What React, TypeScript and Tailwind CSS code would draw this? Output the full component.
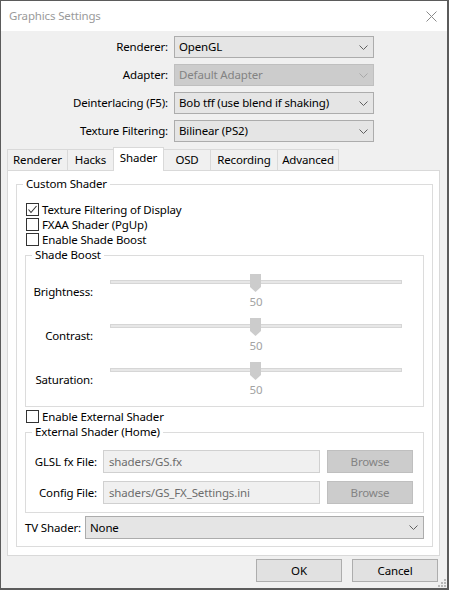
import React from "react";

const font = { fontFamily: '"Noto Sans", "Open Sans", sans-serif' };

function Chevron({ color = "#606060" }: { color?: string }) {
  return (
    <svg width="9" height="5" viewBox="0 0 9 5" className="shrink-0">
      <polyline points="0.5,0.5 4.5,4.5 8.5,0.5" fill="none" stroke={color} strokeWidth="1" />
    </svg>
  );
}

function Combo({ text, disabled = false, className = "" }: { text: string; disabled?: boolean; className?: string }) {
  return (
    <div
      className={
        "flex h-[22px] items-center justify-between border pl-[4px] pr-[5px] " +
        (disabled ? "border-[#bfbfbf] bg-[#cccccc] text-[#838383] " : "border-[#acacac] bg-[#e5e5e5] text-black ") +
        className
      }
    >
      <span className="whitespace-nowrap">{text}</span>
      <Chevron color={disabled ? "#a8a8a8" : "#606060"} />
    </div>
  );
}

function Check({ label, checked = false }: { label: string; checked?: boolean }) {
  return (
    <div className="flex h-[15px] items-center gap-[3px]">
      <div className="ml-[1px] flex h-[13px] w-[13px] shrink-0 items-center justify-center border border-[#333333] bg-white">
        {checked && (
          <svg width="11" height="11" viewBox="0 0 11 11">
            <polyline points="1.5,5.5 4,8.5 9.5,2" fill="none" stroke="#333333" strokeWidth="1.1" />
          </svg>
        )}
      </div>
      <span className="whitespace-nowrap leading-[14px]">{label}</span>
    </div>
  );
}

function Group({ title, children, className = "" }: { title: string; children: React.ReactNode; className?: string }) {
  return (
    <fieldset className={"border border-[#dcdcdc] " + className}>
      <legend className="ml-[6px] px-[3px] leading-[16px]">{title}</legend>
      {children}
    </fieldset>
  );
}

function SliderRow({ label }: { label: string }) {
  return (
    <div className="flex h-[44px] items-start">
      <div className="mt-[21px] w-[67px] whitespace-nowrap text-right leading-[16px]">{label}</div>
      <div className="relative ml-[17px] h-[44px] w-[292px]">
        <div className="absolute left-0 right-0 top-[17px] h-[4px] border border-[#d6d6d6] bg-[#e7e7e7]" />
        <svg width="11" height="18" viewBox="0 0 11 18" className="absolute left-[140px] top-[11px]">
          <polygon points="0,0 11,0 11,13 5.5,18 0,13" fill="#cccccc" />
        </svg>
        <div className="absolute left-[126px] top-[31px] w-[40px] text-center leading-[16px] text-[#a3a3a3]">50</div>
      </div>
    </div>
  );
}

function FileRow({ label, value }: { label: string; value: string }) {
  return (
    <div className="flex h-[23px] items-center">
      <div className="w-[71px] whitespace-nowrap text-right">{label}</div>
      <div className="ml-[6px] flex h-[23px] w-[217px] items-center border border-[#d0d0d0] bg-[#f0f0f0] pl-[5px] text-[#6d6d6d]">
        {value}
      </div>
      <div className="ml-[7px] flex h-[23px] w-[86px] items-center justify-center border border-[#bfbfbf] bg-[#cccccc] text-[#838383]">
        Browse
      </div>
    </div>
  );
}

export default function App() {
  const tabs = [
    { t: "Renderer", w: "w-[60px]" },
    { t: "Hacks", w: "w-[46px]" },
    { t: "Shader", w: "w-[51px]", sel: true },
    { t: "OSD", w: "w-[46px]" },
    { t: "Recording", w: "w-[67px]" },
    { t: "Advanced", w: "w-[62px]" },
  ];
  return (
    <div
      style={font}
      className="relative flex h-[590px] w-[449px] flex-col overflow-hidden border-b-2 border-l border-r-2 border-t border-[#5b5b5b] bg-[#f0f0f0] text-[11.5px] tracking-[-0.15px] text-black"
    >
      {/* Title bar */}
      <div className="flex h-[30px] shrink-0 items-center justify-between bg-white pl-[8px] pr-[8px]">
        <span className="text-[#9a9a9a]">Graphics Settings</span>
        <svg width="11" height="11" viewBox="0 0 11 11" className="mr-[2px]">
          <line x1="0.5" y1="0.5" x2="10.5" y2="10.5" stroke="#8a8a8a" strokeWidth="1" />
          <line x1="10.5" y1="0.5" x2="0.5" y2="10.5" stroke="#8a8a8a" strokeWidth="1" />
        </svg>
      </div>

      {/* Top form */}
      <div className="grid grid-cols-[167px_200px] gap-x-[6px] gap-y-[6px] pt-[5px]">
        <div className="flex h-[22px] items-center justify-end">Renderer:</div>
        <Combo text="OpenGL" />
        <div className="flex h-[22px] items-center justify-end">Adapter:</div>
        <Combo text="Default Adapter" disabled />
        <div className="flex h-[22px] items-center justify-end">Deinterlacing (F5):</div>
        <Combo text="Bob tff (use blend if shaking)" />
        <div className="flex h-[22px] items-center justify-end">Texture Filtering:</div>
        <Combo text="Bilinear (PS2)" />
      </div>

      {/* Tabs */}
      <div className="ml-[6px] mt-[5px] flex items-end">
        {tabs.map((tab, i) => (
          <div
            key={tab.t}
            className={
              "flex items-center justify-center border-l border-t border-[#d9d9d9] " +
              tab.w +
              (i === tabs.length - 1 ? " border-r" : "") +
              (tab.sel
                ? " relative z-10 mb-[-1px] h-[24px] border-r bg-white pb-[3px]"
                : " h-[21px] bg-[#f0f0f0]") +
              (i === 3 ? " border-l-0" : "")
            }
          >
            {tab.t}
          </div>
        ))}
      </div>

      {/* Pane */}
      <div className="ml-[6px] flex h-[386px] w-[433px] flex-col border border-[#d9d9d9] bg-white pl-[8px] pr-[6px] pt-[5px]">
        <Group title="Custom Shader" className="h-[371px]">
          <div className="px-[8px]">
            <div className="pt-[10px]">
              <Check label="Texture Filtering of Display" checked />
              <Check label="FXAA Shader (PgUp)" />
              <Check label="Enable Shade Boost" />
            </div>
            <Group title="Shade Boost" className="h-[160px]">
              <SliderRow label="Brightness:" />
              <SliderRow label="Contrast:" />
              <SliderRow label="Saturation:" />
            </Group>
            <div className="mt-[2px]">
              <Check label="Enable External Shader" />
            </div>
            <Group title="External Shader (Home)" className="h-[89px]">
              <div className="flex flex-col gap-[8px] pt-[10px]">
                <FileRow label="GLSL fx File:" value="shaders/GS.fx" />
                <FileRow label="Config File:" value="shaders/GS_FX_Settings.ini" />
              </div>
            </Group>
            <div className="mt-[3px] flex items-center">
              <span className="w-[60px] shrink-0 whitespace-nowrap">TV Shader:</span>
              <Combo text="None" className="h-[23px] flex-1" />
            </div>
          </div>
        </Group>
      </div>

      {/* Buttons */}
      <div className="mt-[3px] flex justify-end gap-[10px] pr-[9px]">
        <div className="flex h-[23px] w-[86px] items-center justify-center border border-[#adadad] bg-[#e1e1e1]">OK</div>
        <div className="flex h-[23px] w-[86px] items-center justify-center border border-[#adadad] bg-[#e1e1e1]">Cancel</div>
      </div>

      {/* size grip */}
      <svg width="8" height="8" viewBox="0 0 8 8" className="absolute bottom-[1px] right-[1px]">
        {[
          [6, 0],
          [6, 3],
          [3, 3],
          [6, 6],
          [3, 6],
          [0, 6],
        ].map(([x, y], i) => (
          <rect key={i} x={x} y={y} width="2" height="2" fill="#b8b8b8" />
        ))}
      </svg>
    </div>
  );
}
